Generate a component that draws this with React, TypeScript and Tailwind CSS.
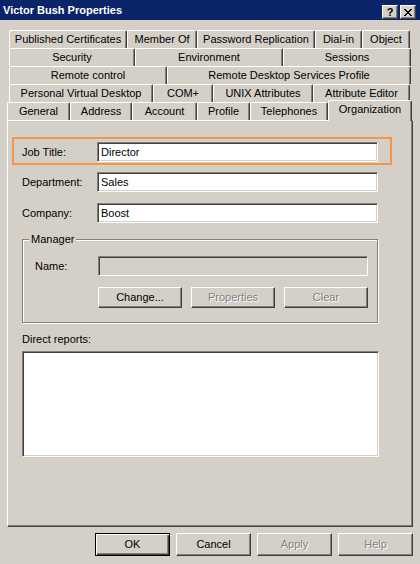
import type { ReactNode } from 'react';

type TabDef = { label: string; w: string; selected?: boolean };

const TAB_ROWS: { pad: string; tabs: TabDef[] }[] = [
  {
    pad: 'pl-[9px]',
    tabs: [
      { label: 'Published Certificates', w: 'w-[118px]' },
      { label: 'Member Of', w: 'w-[70px]' },
      { label: 'Password Replication', w: 'w-[118px]' },
      { label: 'Dial-in', w: 'w-[47px]' },
      { label: 'Object', w: 'w-[48px]' },
    ],
  },
  {
    pad: 'pl-[9px]',
    tabs: [
      { label: 'Security', w: 'w-[126px]' },
      { label: 'Environment', w: 'w-[148px]' },
      { label: 'Sessions', w: 'w-[128px]' },
    ],
  },
  {
    pad: 'pl-[9px]',
    tabs: [
      { label: 'Remote control', w: 'w-[158px]' },
      { label: 'Remote Desktop Services Profile', w: 'w-[244px]' },
    ],
  },
  {
    pad: 'pl-[9px]',
    tabs: [
      { label: 'Personal Virtual Desktop', w: 'w-[144px]' },
      { label: 'COM+', w: 'w-[60px]' },
      { label: 'UNIX Attributes', w: 'w-[100px]' },
      { label: 'Attribute Editor', w: 'w-[97px]' },
    ],
  },
  {
    pad: 'pl-[7px]',
    tabs: [
      { label: 'General', w: 'w-[63px]' },
      { label: 'Address', w: 'w-[62px]' },
      { label: 'Account', w: 'w-[65px]' },
      { label: 'Profile', w: 'w-[53px]' },
      { label: 'Telephones', w: 'w-[78px]' },
      { label: 'Organization', w: 'w-[84px]', selected: true },
    ],
  },
];

const raised =
  'border border-t-white border-l-white border-r-[#404040] border-b-[#404040] shadow-[inset_-1px_-1px_0_#808080]';
const sunken =
  'border border-t-[#808080] border-l-[#808080] border-r-white border-b-white shadow-[inset_1px_1px_0_#404040,inset_-1px_-1px_0_#d4d0c8]';
const disabledText = 'text-[#808080] [text-shadow:1px_1px_0_#fff]';

function Tab({ label, w, selected }: TabDef) {
  return (
    <div
      className={`flex shrink-0 justify-center whitespace-nowrap rounded-t-[2px] border-t border-l border-r border-t-white border-l-white border-r-[#404040] bg-[#d4d0c8] pt-[2px] shadow-[inset_-1px_0_0_#808080] ${w} ${
        selected ? 'relative z-10 -mb-px h-[21px]' : 'h-[18px]'
      }`}
    >
      {label}
    </div>
  );
}

function CaptionButton({ children }: { children: ReactNode }) {
  return (
    <div
      className={`flex h-[14px] w-[16px] items-center justify-center bg-[#d4d0c8] ${raised}`}
    >
      {children}
    </div>
  );
}

function Button({
  label,
  w,
  h,
  disabled,
  isDefault,
}: {
  label: string;
  w: string;
  h: string;
  disabled?: boolean;
  isDefault?: boolean;
}) {
  const frame = isDefault
    ? 'border border-black shadow-[inset_1px_1px_0_#fff,inset_-1px_-1px_0_#404040,inset_-2px_-2px_0_#808080]'
    : raised;
  return (
    <button
      type="button"
      className={`flex shrink-0 items-center justify-center bg-[#d4d0c8] ${w} ${h} ${frame} ${
        disabled ? disabledText : 'text-black'
      }`}
    >
      {label}
    </button>
  );
}

function Field({ value, disabled, w = 'w-[281px]' }: { value?: string; disabled?: boolean; w?: string }) {
  return (
    <div
      className={`flex h-[20px] shrink-0 items-center px-[3px] ${w} ${sunken} ${
        disabled ? 'bg-[#d4d0c8]' : 'bg-white'
      }`}
    >
      {value}
    </div>
  );
}

export default function App() {
  return (
    <div
      className="flex h-[564px] w-[420px] flex-col overflow-hidden bg-[#d4d0c8] text-[11px] leading-[13px] text-black"
      style={{ fontFamily: '"Liberation Sans", Arial, sans-serif' }}
    >
      {/* Title bar */}
      <div className="flex h-[20px] shrink-0 items-start justify-between bg-[#0a246a] pl-[3px] pr-[4px]">
        <span className="pt-[4px] font-bold text-white">Victor Bush Properties</span>
        <div className="flex gap-[2px] pt-[5px]">
          <CaptionButton>
            <span className="text-[11px] font-bold leading-none">?</span>
          </CaptionButton>
          <CaptionButton>
            <svg width="8" height="7" viewBox="0 0 8 7" shapeRendering="crispEdges">
              <path d="M0 0h2v1H0zM6 0h2v1H6zM1 1h2v1H1zM5 1h2v1H5zM2 2h4v1H2zM3 3h2v1H3zM2 4h4v1H2zM1 5h2v1H1zM5 5h2v1H5zM0 6h2v1H0zM6 6h2v1H6z" fill="#000" />
            </svg>
          </CaptionButton>
        </div>
      </div>

      {/* Tab rows */}
      <div className="shrink-0 pt-[10px]">
        {TAB_ROWS.map((row, i) => (
          <div key={i} className={`flex h-[18px] items-end ${row.pad}`}>
            {row.tabs.map((t) => (
              <Tab key={t.label} {...t} />
            ))}
          </div>
        ))}
      </div>

      {/* Tab page */}
      <div className="ml-[7px] flex h-[407px] w-[406px] shrink-0 flex-col border border-t-white border-l-white border-r-[#404040] border-b-[#404040] shadow-[inset_-1px_-1px_0_#808080]">
        {/* Job Title (highlighted) */}
        <div className="ml-[4px] mt-[16px] flex h-[28px] w-[380px] items-start border-2 border-[#f79646] pl-[8px] pt-[3px]">
          <span className="w-[75px] shrink-0 leading-[20px]">Job Title:</span>
          <Field value="Director" />
        </div>

        <div className="ml-[14px] mt-[7px] flex h-[20px] items-center">
          <span className="w-[75px] shrink-0">Department:</span>
          <Field value="Sales" />
        </div>

        <div className="ml-[14px] mt-[11px] flex h-[20px] items-center">
          <span className="w-[75px] shrink-0">Company:</span>
          <Field value="Boost" />
        </div>

        {/* Manager group */}
        <fieldset className="ml-[14px] mt-[10px] w-[356px] border border-[#808080] pb-[14px] pl-[12px] shadow-[inset_1px_1px_0_#fff,1px_1px_0_#fff]">
          <legend className="-ml-[6px] bg-[#d4d0c8] px-[2px]">Manager</legend>
          <div className="mt-[10px] flex h-[20px] items-center">
            <span className="w-[63px] shrink-0">Name:</span>
            <Field disabled w="w-[270px]" />
          </div>
          <div className="ml-[63px] mt-[11px] flex gap-[9px]">
            <Button label="Change..." w="w-[84px]" h="h-[21px]" />
            <Button label="Properties" w="w-[84px]" h="h-[21px]" disabled />
            <Button label="Clear" w="w-[84px]" h="h-[21px]" disabled />
          </div>
        </fieldset>

        <div className="ml-[14px] mt-[10px]">Direct reports:</div>
        <div className={`ml-[14px] mt-[5px] h-[106px] w-[357px] bg-white ${sunken}`} />
      </div>

      {/* Dialog buttons */}
      <div className="mt-[6px] flex justify-end gap-[6px] pr-[7px]">
        <Button label="OK" w="w-[75px]" h="h-[23px]" isDefault />
        <Button label="Cancel" w="w-[75px]" h="h-[23px]" />
        <Button label="Apply" w="w-[75px]" h="h-[23px]" disabled />
        <Button label="Help" w="w-[75px]" h="h-[23px]" disabled />
      </div>
    </div>
  );
}
